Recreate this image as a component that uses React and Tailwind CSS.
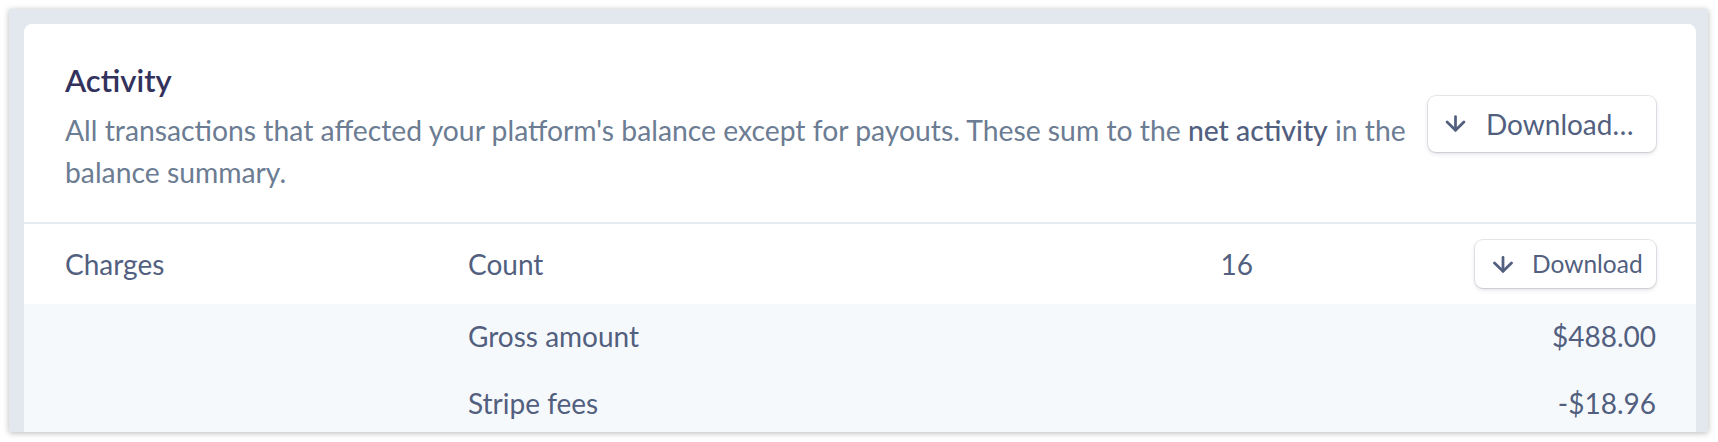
import React from "react";

function ArrowDown({ className }) {
  return (
    <svg viewBox="0 0 20 16" className={className} fill="none" stroke="currentColor" strokeWidth="2.6" strokeLinecap="round" strokeLinejoin="round">
      <path d="M10 1.4 V14.4" />
      <path d="M2 6.6 L10 14.4 L18 6.6" />
    </svg>
  );
}

const btnShadow =
  "shadow-[0_0_0_1px_rgba(50,50,93,0.1),0_2px_5px_0_rgba(50,50,93,0.12),0_1px_2px_0_rgba(0,0,0,0.08)]";

export default function App() {
  return (
    <div className="w-[1718px] h-[442px] bg-white pt-[9px] pl-[9px] overflow-hidden" style={{ fontFamily: "Lato, 'Noto Sans', sans-serif" }}>
      <div className="w-[1699px] h-[423px] bg-[#e3e8ee] pt-[15px] pl-[15px] pr-[12px] overflow-hidden shadow-[0_1px_6px_rgba(0,0,0,0.28)]">
        <div className="h-full bg-white rounded-t-[8px] overflow-hidden">
          {/* Header */}
          <div className="flex items-center pl-[41px] pr-[40px] pt-[36px] pb-[29px] border-b-2 border-[#e6ebf1]">
            <div className="flex-1 mr-[4px]">
              <h2 className="text-[31px] leading-[40px] font-semibold text-[#32325d]">Activity</h2>
              <p className="mt-[9px] text-[28.3px] leading-[42px] text-[#6b7c93]">
                All transactions that affected your platform's balance except for payouts. These sum to the{" "}
                <span className="font-medium text-[#525f7f]">net activity</span> in the balance summary.
              </p>
            </div>
            <button className={`-mt-[6px] h-[56px] w-[228px] rounded-[8px] bg-white flex items-center pl-[17px] gap-[20px] text-[28px] text-[#525f7f] ${btnShadow}`}>
              <ArrowDown className="w-[21px] h-[17px] shrink-0" />
              <span>Download…</span>
            </button>
          </div>

          {/* Charges row */}
          <div className="flex items-center h-[80px] pl-[41px] pr-[40px] text-[28px] text-[#525f7f]">
            <div className="w-[403px]">Charges</div>
            <div className="flex-1">Count</div>
            <div>16</div>
            <button className={`ml-[222px] h-[48px] w-[181px] rounded-[8px] bg-white flex items-center pl-[17px] gap-[18px] text-[24.5px] text-[#525f7f] ${btnShadow}`}>
              <ArrowDown className="w-[22px] h-[17px] shrink-0" />
              <span>Download</span>
            </button>
          </div>

          {/* Detail rows */}
          <div className="bg-[#f6f9fc] text-[28px] text-[#525f7f] h-full">
            <div className="flex items-center h-[67px] pb-[4px] pl-[444px] pr-[40px]">
              <div className="flex-1">Gross amount</div>
              <div>$488.00</div>
            </div>
            <div className="flex items-center h-[67px] pb-[4px] pl-[444px] pr-[40px]">
              <div className="flex-1">Stripe fees</div>
              <div>-$18.96</div>
            </div>
          </div>
        </div>
      </div>
    </div>
  );
}
